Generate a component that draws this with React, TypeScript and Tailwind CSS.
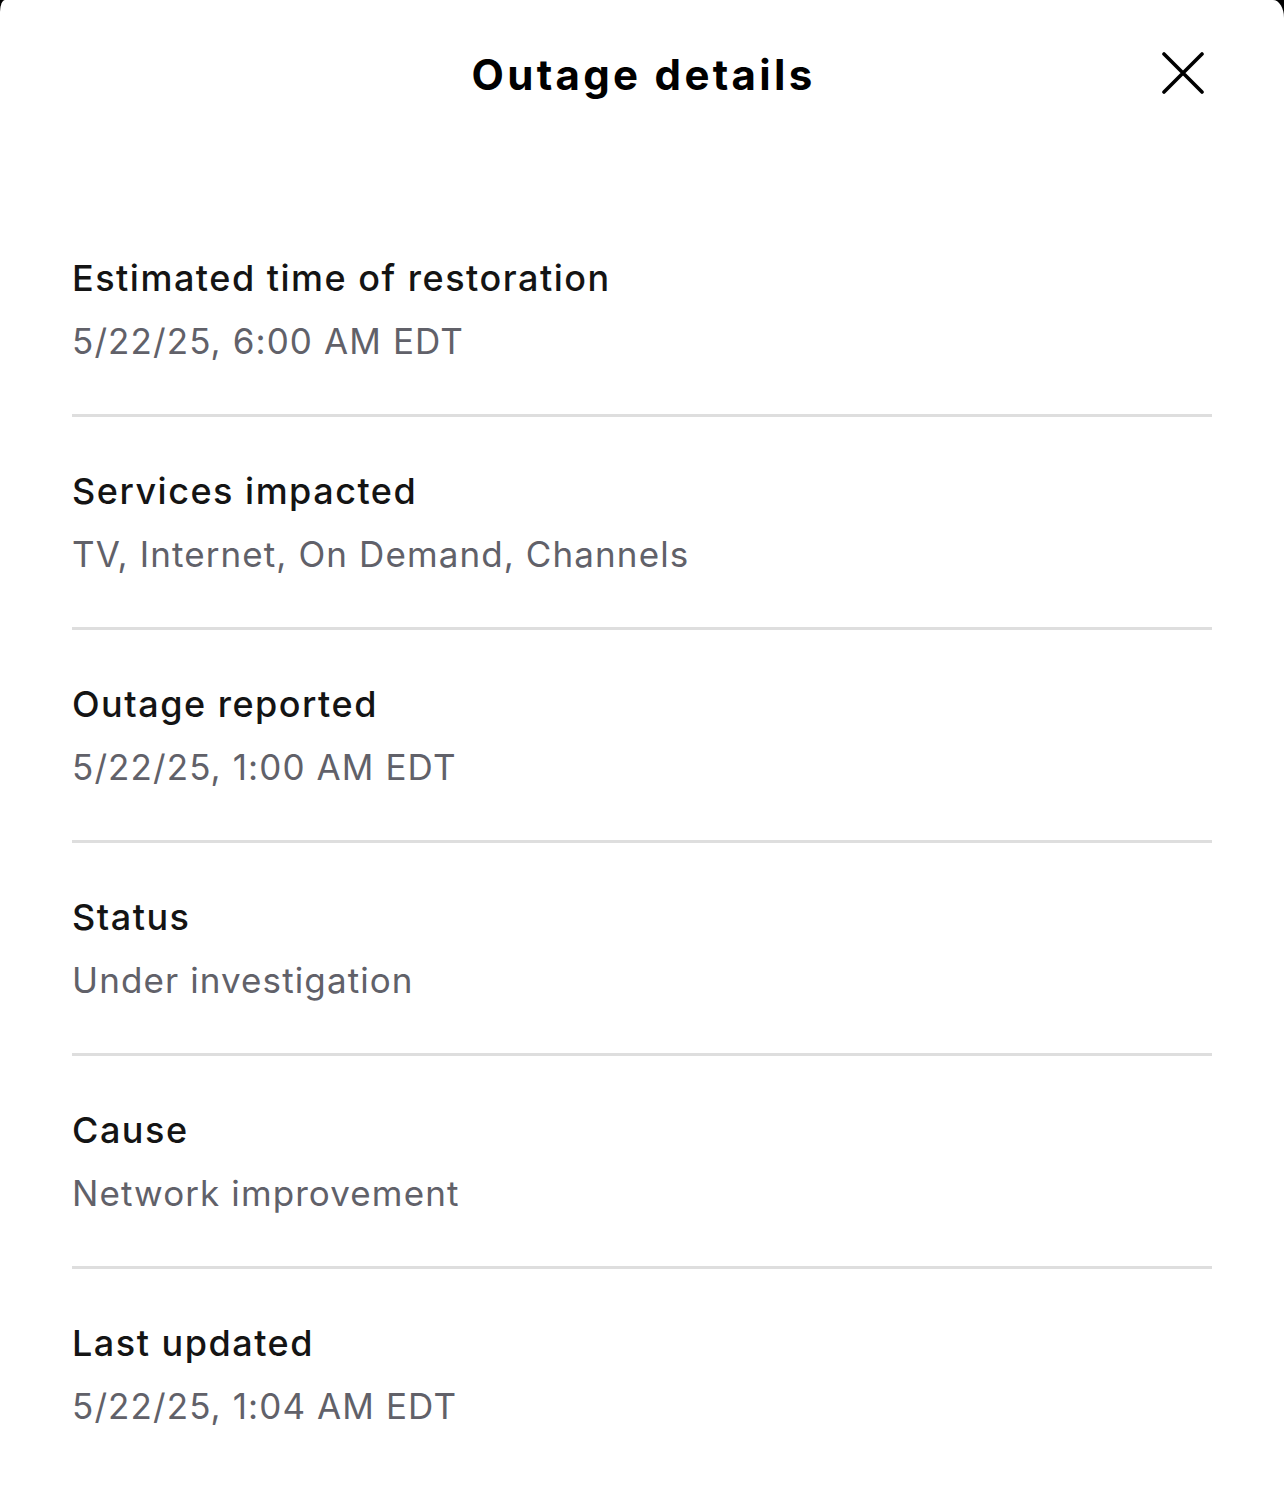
import React from "react";

const rows = [
  { label: "Estimated time of restoration", value: "5/22/25, 6:00 AM EDT" },
  { label: "Services impacted", value: "TV, Internet, On Demand, Channels" },
  { label: "Outage reported", value: "5/22/25, 1:00 AM EDT" },
  { label: "Status", value: "Under investigation" },
  { label: "Cause", value: "Network improvement" },
  { label: "Last updated", value: "5/22/25, 1:04 AM EDT" },
];

export default function App() {
  return (
    <div className="w-[1284px] h-[1495px] bg-black">
      <div
        className="w-full h-full bg-white rounded-tl-[5px_12px] rounded-tr-[11px_18px] flex flex-col"
        style={{ fontFamily: "Inter, 'Noto Sans', sans-serif" }}
      >
        <div className="relative h-[148px] flex items-center justify-center">
          <h1 className="text-[42px] font-bold text-black tracking-[3.3px] pl-[3px]">Outage details</h1>
          <button className="absolute left-[1156px] top-[46px] w-[52px] h-[52px] flex items-center justify-center">
            <svg width="44" height="44" viewBox="0 0 44 44" fill="none">
              <path d="M4 4 L42 42 M42 4 L4 42" stroke="#000" strokeWidth="3.6" strokeLinecap="round" />
            </svg>
          </button>
        </div>
        <div className="mt-[56px] px-[72px] flex flex-col">
          {rows.map((r, i) => (
            <div
              key={r.label}
              className={
                "pt-[52px] pb-[51px] flex flex-col gap-[19px] " +
                (i < rows.length - 1 ? "border-b-[3px] border-[#dedede]" : "")
              }
            >
              <div className="text-[36px] leading-[44px] font-medium text-[#141414] tracking-[1.5px]">{r.label}</div>
              <div className="text-[35px] leading-[44px] font-normal text-[#616169] tracking-[1.1px]">{r.value}</div>
            </div>
          ))}
        </div>
      </div>
    </div>
  );
}
